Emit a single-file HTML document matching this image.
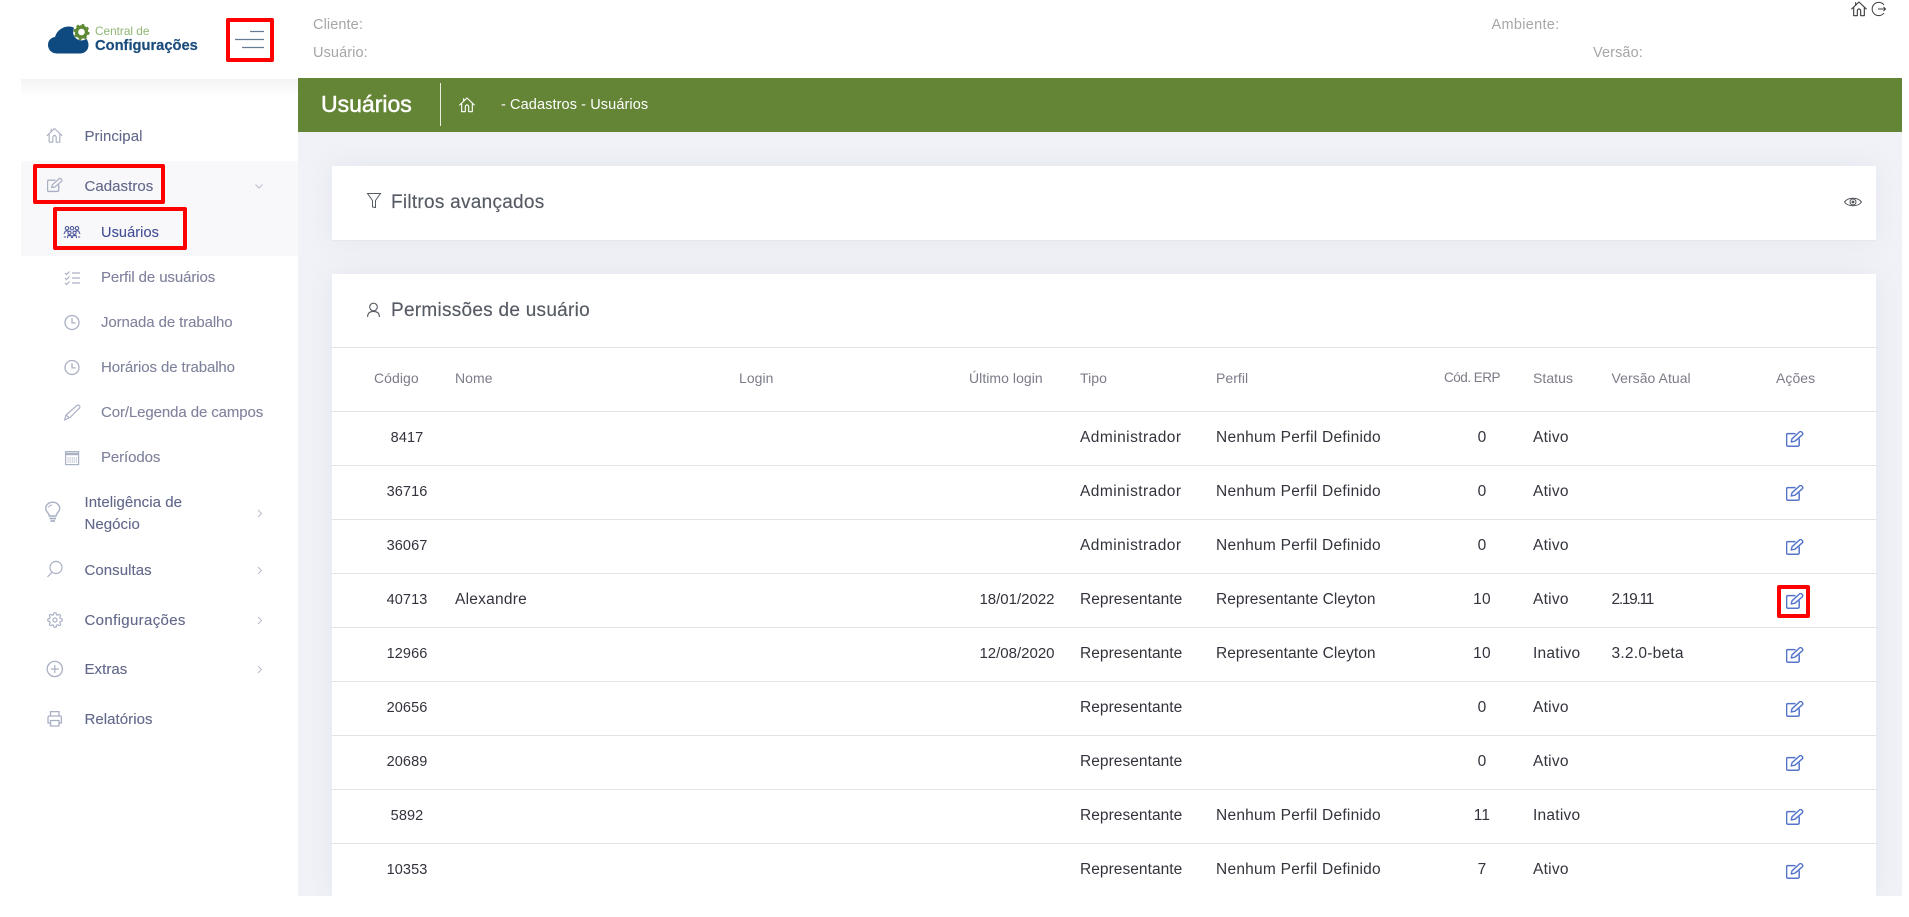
<!DOCTYPE html>
<html lang="pt-BR">
<head>
<meta charset="utf-8">
<title>Usuários</title>
<style>
html,body{margin:0;padding:0;background:#fff;}
body{width:1909px;height:917px;position:relative;overflow:hidden;font-family:"Liberation Sans",sans-serif;}
.t{position:absolute;white-space:nowrap;line-height:20px;}
.bg{position:absolute;}
.side{font-size:15px;letter-spacing:.05px;color:#62688a;-webkit-text-stroke:.12px #62688a;}
.sub{font-size:15px;letter-spacing:-.1px;color:#7f829c;-webkit-text-stroke:.1px #7f829c;}
.top{font-size:14.5px;letter-spacing:.1px;color:#a6a6a6;}
.h2{font-size:19px;letter-spacing:.27px;color:#555a63;-webkit-text-stroke:.15px #555a63;}
.th{font-size:14px;letter-spacing:.05px;color:#7b7c88;top:368px;}
.row{position:absolute;left:332px;width:1544px;height:54px;border-top:1px solid #e4e4e7;box-sizing:border-box;}
.row span{position:absolute;top:16px;line-height:20px;font-size:15.5px;letter-spacing:.25px;color:#32333c;white-space:nowrap;}
.row span.c{left:0;width:150px;text-align:center;font-size:14.5px;letter-spacing:.1px;}
.n{left:123px;}
.row span.d{left:610px;width:150px;text-align:center;font-size:15px;letter-spacing:0;}
.ti{left:748px;}
.row span.a{letter-spacing:.45px;}
.row span.r{letter-spacing:.05px;}
.p{left:884px;}
.e{left:1075px;width:150px;text-align:center;}
.s{left:1201px;}
.v{left:1279.5px;}
.row span.v2{letter-spacing:-1.3px;}
.red{position:absolute;border:4px solid #f00;border-radius:2px;box-sizing:border-box;}
svg{position:absolute;left:0;top:0;}
</style>
</head>
<body>
<!-- backgrounds -->
<div class="bg" style="left:298px;top:78px;width:1604px;height:818px;background:#f0f2f7;"></div>
<div class="bg" style="left:298px;top:78px;width:1604px;height:54px;background:#648436;"></div>
<div class="bg" style="left:21px;top:79px;width:277px;height:18px;background:linear-gradient(#f4f4f5,#fff);"></div>
<div class="bg" style="left:21px;top:161px;width:277px;height:95px;background:#f8f8fb;"></div>
<div class="bg" style="left:332px;top:166px;width:1544px;height:75px;background:#fff;border-bottom:1px solid #e6e7ea;box-sizing:border-box;box-shadow:0 0 26px rgba(170,175,200,.16);"></div>
<div class="bg" style="left:332px;top:274px;width:1544px;height:622px;background:#fff;box-shadow:0 0 26px rgba(170,175,200,.16);"></div>
<div class="bg" style="left:298px;top:896px;width:1611px;height:21px;background:#fff;"></div>
<div class="bg" style="left:1902px;top:0;width:7px;height:917px;background:#fff;"></div>
<div class="bg" style="left:332px;top:347px;width:1544px;height:1px;background:#e4e4e7;"></div>

<!-- logo text -->
<div class="t" style="left:95px;top:21px;font-size:11.8px;color:#90b574;">Central de</div>
<div class="t" style="left:95px;top:36px;font-size:14.7px;font-weight:bold;color:#1b4c7c;-webkit-text-stroke:.2px #1b4c7c;">Configurações</div>

<!-- top info -->
<div class="t top" style="left:313px;top:15px;">Cliente:</div>
<div class="t top" style="left:313px;top:43px;">Usuário:</div>
<div class="t top" style="left:1491.5px;top:15px;letter-spacing:.3px;">Ambiente:</div>
<div class="t top" style="left:1593px;top:43px;">Versão:</div>

<!-- title bar -->
<div class="t" style="left:321px;top:94px;font-size:23px;color:#fff;-webkit-text-stroke:.5px #fff;">Usuários</div>
<div class="bg" style="left:440px;top:83px;width:1px;height:43px;background:#e8eede;"></div>
<div class="t" style="left:501px;top:95px;font-size:14.5px;letter-spacing:.1px;color:#fff;">- Cadastros - Usuários</div>

<!-- sidebar -->
<div class="t side" style="left:84.5px;top:127px;">Principal</div>
<div class="t side" style="left:84.5px;top:177px;">Cadastros</div>
<div class="t" style="left:101px;top:223px;font-size:14.5px;letter-spacing:.1px;color:#434e94;-webkit-text-stroke:.12px #434e94;">Usuários</div>
<div class="t sub" style="left:101px;top:268px;">Perfil de usuários</div>
<div class="t sub" style="left:101px;top:313px;">Jornada de trabalho</div>
<div class="t sub" style="left:101px;top:358px;">Horários de trabalho</div>
<div class="t sub" style="left:101px;top:403px;">Cor/Legenda de campos</div>
<div class="t sub" style="left:101px;top:448px;">Períodos</div>
<div class="t side" style="left:84.5px;top:493px;">Inteligência de</div>
<div class="t side" style="left:84.5px;top:515px;">Negócio</div>
<div class="t side" style="left:84.5px;top:561px;">Consultas</div>
<div class="t side" style="left:84.5px;top:611px;letter-spacing:.35px;">Configurações</div>
<div class="t side" style="left:84.5px;top:660px;">Extras</div>
<div class="t side" style="left:84.5px;top:710px;">Relatórios</div>

<!-- card titles -->
<div class="t h2" style="left:391px;top:193px;">Filtros avançados</div>
<div class="t h2" style="left:391px;top:301px;">Permissões de usuário</div>

<!-- table header -->
<div class="t th" style="left:374px;">Código</div>
<div class="t th" style="left:455px;">Nome</div>
<div class="t th" style="left:739px;">Login</div>
<div class="t th" style="left:969px;">Último login</div>
<div class="t th" style="left:1080px;">Tipo</div>
<div class="t th" style="left:1216px;">Perfil</div>
<div class="t th" style="left:1444px;font-size:13.5px;letter-spacing:-.5px;">Cód. ERP</div>
<div class="t th" style="left:1533px;">Status</div>
<div class="t th" style="left:1611.5px;">Versão Atual</div>
<div class="t th" style="left:1776px;">Ações</div>

<!-- rows -->
<div class="row" style="top:411px;"><span class="c">8417</span><span class="ti a">Administrador</span><span class="p">Nenhum Perfil Definido</span><span class="e">0</span><span class="s">Ativo</span></div>
<div class="row" style="top:465px;"><span class="c">36716</span><span class="ti a">Administrador</span><span class="p">Nenhum Perfil Definido</span><span class="e">0</span><span class="s">Ativo</span></div>
<div class="row" style="top:519px;"><span class="c">36067</span><span class="ti a">Administrador</span><span class="p">Nenhum Perfil Definido</span><span class="e">0</span><span class="s">Ativo</span></div>
<div class="row" style="top:573px;"><span class="c">40713</span><span class="n">Alexandre</span><span class="d">18/01/2022</span><span class="ti r">Representante</span><span class="p r">Representante Cleyton</span><span class="e">10</span><span class="s">Ativo</span><span class="v v2">2.19.11</span></div>
<div class="row" style="top:627px;"><span class="c">12966</span><span class="d">12/08/2020</span><span class="ti r">Representante</span><span class="p r">Representante Cleyton</span><span class="e">10</span><span class="s">Inativo</span><span class="v">3.2.0-beta</span></div>
<div class="row" style="top:681px;"><span class="c">20656</span><span class="ti r">Representante</span><span class="e">0</span><span class="s">Ativo</span></div>
<div class="row" style="top:735px;"><span class="c">20689</span><span class="ti r">Representante</span><span class="e">0</span><span class="s">Ativo</span></div>
<div class="row" style="top:789px;"><span class="c">5892</span><span class="ti r">Representante</span><span class="p">Nenhum Perfil Definido</span><span class="e">11</span><span class="s">Inativo</span></div>
<div class="row" style="top:843px;height:53px;"><span class="c">10353</span><span class="ti r">Representante</span><span class="p">Nenhum Perfil Definido</span><span class="e">7</span><span class="s">Ativo</span></div>

<!-- icons -->
<svg width="1909" height="917" viewBox="0 0 1909 917" fill="none">
<defs>
<symbol id="home" viewBox="0 0 24 24" overflow="visible"><path d="M1 12 L12 1.5 L23 12 M4 9.5 V22 H9.5 V14.5 a2.5 2.5 0 0 1 5 0 V22 H20 V9.5 M7 6.5 V2.5" fill="none" stroke="currentColor" stroke-width="1.7" stroke-linejoin="round" stroke-linecap="round"/></symbol>
<symbol id="edit" viewBox="0 0 18 16"><path d="M9.5 2.6 H1.8 a1.2 1.2 0 0 0-1.2 1.2 V14 a1.2 1.2 0 0 0 1.2 1.2 H12 a1.2 1.2 0 0 0 1.2-1.2 V7.5" fill="none" stroke="currentColor" stroke-width="1.5"/><path d="M5.2 11 L6 7.8 L13.6 .9 a1.3 1.3 0 0 1 1.9 0 l.9.9 a1.3 1.3 0 0 1 0 1.9 L9 10.2 Z" fill="none" stroke="currentColor" stroke-width="1.4" stroke-linejoin="round"/></symbol>
<symbol id="clock" viewBox="0 0 16 16"><circle cx="8" cy="8" r="7" fill="none" stroke="currentColor" stroke-width="1.3"/><path d="M8 3.6 V8.4 H11.6" fill="none" stroke="currentColor" stroke-width="1.3"/></symbol>
<symbol id="gear" viewBox="0 0 24 24"><circle cx="12" cy="12" r="3" fill="none" stroke="currentColor" stroke-width="1.8"/><path fill="none" stroke="currentColor" stroke-width="1.8" d="M19.4 15a1.65 1.65 0 0 0 .33 1.82l.06.06a2 2 0 0 1 0 2.83 2 2 0 0 1-2.83 0l-.06-.06a1.65 1.65 0 0 0-1.82-.33 1.65 1.65 0 0 0-1 1.51V21a2 2 0 0 1-2 2 2 2 0 0 1-2-2v-.09A1.65 1.65 0 0 0 9 19.4a1.65 1.65 0 0 0-1.82.33l-.06.06a2 2 0 0 1-2.83 0 2 2 0 0 1 0-2.83l.06-.06a1.65 1.65 0 0 0 .33-1.82 1.65 1.65 0 0 0-1.51-1H3a2 2 0 0 1-2-2 2 2 0 0 1 2-2h.09A1.65 1.65 0 0 0 4.6 9a1.65 1.65 0 0 0-.33-1.82l-.06-.06a2 2 0 0 1 0-2.83 2 2 0 0 1 2.83 0l.06.06a1.65 1.65 0 0 0 1.82.33H9a1.65 1.65 0 0 0 1-1.51V3a2 2 0 0 1 2-2 2 2 0 0 1 2 2v.09a1.65 1.65 0 0 0 1 1.51 1.65 1.65 0 0 0 1.82-.33l.06-.06a2 2 0 0 1 2.83 0 2 2 0 0 1 0 2.83l-.06.06a1.65 1.65 0 0 0-.33 1.82V9a1.65 1.65 0 0 0 1.51 1H21a2 2 0 0 1 2 2 2 2 0 0 1-2 2h-.09a1.65 1.65 0 0 0-1.51 1z"/></symbol>
</defs>

<!-- logo -->
<path d="M57 53.5 C51 53.5 48 49 48 45 C48 40.5 51 37.5 55 37 C57 30 63 26.5 69 26.5 C74 26.5 78 30 80 35 C85 36 88.5 40 88.5 45 C88.5 50 85 53.5 80 53.5 Z" fill="#0e4a80"/>
<circle cx="81.5" cy="32" r="8.4" fill="#fff"/>
<circle cx="81.5" cy="32" r="5" fill="none" stroke="#5f8a35" stroke-width="3.4"/>
<circle cx="81.5" cy="32" r="6.9" fill="none" stroke="#5f8a35" stroke-width="2.4" stroke-dasharray="2.6 2.82"/>

<!-- hamburger -->
<path d="M250 31.5 H264 M235 39.5 H264 M242 47.5 H264" stroke="#647b92" stroke-width="1.2"/>

<!-- top right icons -->
<use href="#home" x="1851" y="1" width="16" height="16" color="#3c3c3c"/>
<path d="M1884 5 A6.6 6.6 0 1 0 1884 13 M1878 9 H1885.5 M1883.5 7 L1885.5 9 L1883.5 11" stroke="#3c3c3c" stroke-width="1"/>

<!-- title bar home -->
<use href="#home" x="459" y="97" width="16" height="16" color="#fff"/>

<!-- sidebar icons -->
<use href="#home" x="46" y="127.5" width="17" height="16" color="#a9b0c4"/>
<use href="#edit" x="47" y="177" width="16" height="16" color="#a9b0c4"/>
<g stroke="#4c5798" stroke-width="1.1" fill="none" transform="translate(63,226)">
<circle cx="4" cy="2.2" r="1.7"/><circle cx="9" cy="2.2" r="1.7"/><circle cx="14" cy="2.2" r="1.7"/>
<path d="M1 8 L2.4 5 H5.5 M12.5 5 H15.6 L17 8 M.8 11 L3 11 M15 11 L17.2 11"/>
<circle cx="6.5" cy="6.8" r="1.6"/><circle cx="11.5" cy="6.8" r="1.6"/>
<path d="M4.4 12 L5 9.6 H8 L8.6 12 M9.4 12 L10 9.6 H13 L13.6 12"/>
</g>
<path d="M65 273 l1.5 1.5 l3-3 M65 278 l1.5 1.5 l3-3 M65 283 l1.5 1.5 l3-3 M72 273 H80 M72 278 H80 M72 283 H80" stroke="#a9b0c4" stroke-width="1.2"/>
<use href="#clock" x="64" y="314.5" width="16" height="16" color="#a9b0c4"/>
<use href="#clock" x="64" y="359.5" width="16" height="16" color="#a9b0c4"/>
<path d="M64.5 420 L66 415 L76.5 405.8 a1.8 1.8 0 0 1 3 2.3 L70 417.5 Z M66 415 L69.5 418" stroke="#a9b0c4" stroke-width="1.2" stroke-linejoin="round"/>
<g stroke="#a9b0c4" stroke-width="1.2">
<rect x="65.6" y="451.6" width="13" height="13" />
<path d="M65.6 454 H78.6" stroke-width="2.4"/>
<path d="M67.5 458 H77 M67.5 460 H77 M67.5 462 H77" stroke-dasharray="1.2 .9" stroke-width="1.1"/>
</g>
<g stroke="#a9b0c4" stroke-width="1.4">
<path d="M49.3 516 C49.3 513 45.7 512 45.7 508.6 A7 6.4 0 0 1 59.7 508.6 C59.7 512 56.1 513 56.1 516 Z"/>
<path d="M48.5 507.5 A4.3 4 0 0 1 52 505" stroke-width="1"/>
<path d="M49.5 518.5 H56 M50.5 521 H55" stroke-width="1.8"/>
</g>
<path d="M47.5 577 L52.5 571.5" stroke="#a9b0c4" stroke-width="1.2"/><circle cx="56" cy="567.5" r="6" stroke="#a9b0c4" stroke-width="1.2"/>
<use href="#gear" x="47" y="612" width="16" height="16" color="#a9b0c4"/>
<circle cx="54.8" cy="669" r="7.6" stroke="#a9b0c4" stroke-width="1.3"/>
<path d="M54.8 665 V673 M50.8 669 H58.8" stroke="#a9b0c4" stroke-width="1.2"/>
<path d="M50.5 716 V711.6 H59 V716 M50.5 723 H48 V717.4 a1.4 1.4 0 0 1 1.4-1.4 H60 a1.4 1.4 0 0 1 1.4 1.4 V723 H59 M50.5 720.5 H59 V726 H50.5 Z" stroke="#a9b0c4" stroke-width="1.3"/>

<!-- chevrons -->
<path d="M255.5 184.5 L259 188 L262.5 184.5" stroke="#b9bcca" stroke-width="1"/>
<path d="M258 510 L261.5 513.5 L258 517 M258 567 L261.5 570.5 L258 574 M258 617 L261.5 620.5 L258 624 M258 666 L261.5 669.5 L258 673" stroke="#b9bcca" stroke-width="1"/>

<!-- card icons -->
<path d="M367.5 193.5 H380.5 L375.5 200.5 V207.5 L372.5 207 V200.5 Z" stroke="#555a63" stroke-width="1"/>
<g stroke="#555a63" stroke-width="1.1"><circle cx="373.5" cy="307" r="3.8"/><path d="M367.6 317 C367.6 313 370 311.4 373.5 311.4 C377 311.4 379.4 313 379.4 317"/></g>
<g stroke="#4f5259" stroke-width="1"><path d="M1844.5 202 C1848 197 1858 197 1861.5 202 C1858 207 1848 207 1844.5 202 Z"/><circle cx="1853" cy="202" r="3"/><circle cx="1853" cy="202" r="1.4" fill="#4f5259" stroke="none"/></g>

<!-- table edit icons -->
<g color="#5574cb">
<use href="#edit" x="1786" y="431" width="18" height="16"/>
<use href="#edit" x="1786" y="485" width="18" height="16"/>
<use href="#edit" x="1786" y="539" width="18" height="16"/>
<use href="#edit" x="1786" y="593" width="18" height="16"/>
<use href="#edit" x="1786" y="647" width="18" height="16"/>
<use href="#edit" x="1786" y="701" width="18" height="16"/>
<use href="#edit" x="1786" y="755" width="18" height="16"/>
<use href="#edit" x="1786" y="809" width="18" height="16"/>
<use href="#edit" x="1786" y="863" width="18" height="16"/>
</g>
</svg>

<!-- red annotation boxes -->
<div class="red" style="left:226px;top:18px;width:48px;height:44px;"></div>
<div class="red" style="left:33px;top:164px;width:132px;height:40px;"></div>
<div class="red" style="left:53px;top:207px;width:134px;height:43px;"></div>
<div class="red" style="left:1777px;top:585px;width:33px;height:33px;"></div>
</body>
</html>
